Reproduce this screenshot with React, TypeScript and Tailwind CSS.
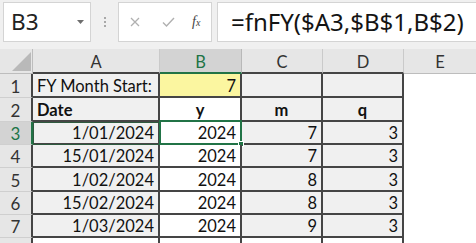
import { ReactNode } from 'react';

type Row = { n: number; a: string; b: string; c: string; d: string; h: string };

const rows: Row[] = [
  { n: 1, a: 'FY Month Start:', b: '7', c: '', d: '', h: 'h-[24px]' },
  { n: 2, a: 'Date', b: 'y', c: 'm', d: 'q', h: 'h-[24px]' },
  { n: 3, a: '1/01/2024', b: '2024', c: '7', d: '3', h: 'h-[23px]' },
  { n: 4, a: '15/01/2024', b: '2024', c: '7', d: '3', h: 'h-[23px]' },
  { n: 5, a: '1/02/2024', b: '2024', c: '8', d: '3', h: 'h-[24px]' },
  { n: 6, a: '15/02/2024', b: '2024', c: '8', d: '3', h: 'h-[23px]' },
  { n: 7, a: '1/03/2024', b: '2024', c: '9', d: '3', h: 'h-[23px]' },
];

const TopBar = () => (
  <div className="flex h-[49px] items-start pl-[3px] pt-[2px] font-['Noto_Sans',sans-serif]">
    <div className="flex h-[40px] w-[88px] items-center justify-between border border-[#d4d4d4] bg-white pl-[7px] pr-[6px]">
      <span className="text-[22.5px] leading-none text-[#222]">B3</span>
      <svg width="7" height="4" viewBox="0 0 7 4">
        <path d="M0 0h7L3.5 4z" fill="#6e6e6e" />
      </svg>
    </div>
    <div className="flex h-[40px] w-[27px] flex-col items-center justify-center gap-[2px]">
      <span className="h-[2px] w-[2px] bg-[#a8a8a8]" />
      <span className="h-[2px] w-[2px] bg-[#a8a8a8]" />
      <span className="h-[2px] w-[2px] bg-[#a8a8a8]" />
    </div>
    <div className="flex h-[40px] w-[94px] items-center border border-[#d4d4d4] bg-white">
      <svg className="ml-[11px]" width="10" height="10" viewBox="0 0 10 10">
        <path d="M1 1l8 8M9 1l-8 8" stroke="#b0b0b0" strokeWidth="1.3" />
      </svg>
      <svg className="ml-[22px]" width="13" height="10" viewBox="0 0 13 10">
        <path d="M1 5.5l3.5 3.5L12 1" stroke="#b0b0b0" strokeWidth="1.4" fill="none" />
      </svg>
      <span className="ml-[17px] font-['Liberation_Serif',serif] text-[14px] italic leading-none text-[#444]">
        f<span className="text-[10px]">x</span>
      </span>
    </div>
    <div className="ml-[5px] flex h-[40px] flex-1 items-center border border-r-0 border-[#d4d4d4] bg-white pl-[13px]">
      <span className="text-[24px] leading-none text-[#141414]">=fnFY($A3,$B$1,B$2)</span>
    </div>
  </div>
);

const Cell = ({ children, className }: { children?: ReactNode; className?: string }) => (
  <div
    className={`flex items-center border-b-2 border-r-2 border-[#454545] px-[4px] pt-[2px] text-[16.5px] text-[#111] ${className ?? ''}`}
  >
    {children}
  </div>
);

const Sheet = () => (
  <div className="grid grid-cols-[33px_127px_82px_81px_81px_1fr] font-['Lato',sans-serif]">
    {/* column headers */}
    <div className="flex h-[25px] items-end justify-end border-b border-r border-[#bdbdbd] bg-[#e6e6e6] pb-[2px] pr-[1px]">
      <svg width="19" height="19" viewBox="0 0 19 19">
        <path d="M19 0V19H0z" fill="#b9b9b9" />
      </svg>
    </div>
    <div className="flex h-[25px] items-center justify-center border-r border-b-2 border-r-[#cacaca] border-b-[#454545] bg-[#e6e6e6] pt-[3px] text-[16.5px] text-[#333]">
      A
    </div>
    <div className="flex h-[25px] items-center justify-center border-r border-b-2 border-r-[#b8b8b8] border-b-[#217346] bg-[#d3d3d3] pt-[3px] text-[16.5px] text-[#217346]">
      B
    </div>
    <div className="flex h-[25px] items-center justify-center border-r border-b-2 border-r-[#cacaca] border-b-[#454545] bg-[#e6e6e6] pt-[3px] text-[16.5px] text-[#333]">
      C
    </div>
    <div className="flex h-[25px] items-center justify-center border-r border-b-2 border-r-[#cacaca] border-b-[#454545] bg-[#e6e6e6] pt-[3px] text-[16.5px] text-[#333]">
      D
    </div>
    <div className="flex h-[25px] items-center justify-center border-b border-[#bdbdbd] bg-[#e6e6e6] pt-[3px] text-[16.5px] text-[#333]">
      E
    </div>

    {rows.map((r) => {
      const sel = r.n === 3;
      const bold = r.n === 2 ? 'font-bold' : '';
      return [
        <div
          key={`h${r.n}`}
          className={`${r.h} flex items-center justify-center border-b border-r-2 border-b-[#cfcfcf] pt-[2px] text-[17px] ${
            sel ? 'border-r-[#217346] bg-[#d3d3d3] text-[#217346]' : 'border-r-[#454545] bg-[#e6e6e6] text-[#333]'
          }`}
        >
          {r.n}
        </div>,
        <Cell
          key={`a${r.n}`}
          className={`${r.h} ${bold} ${r.n <= 2 ? 'justify-start' : 'justify-end'} ${
            sel ? 'border-[#2f5a3f] outline outline-1 -outline-offset-1 outline-[#2f5a3f]' : ''
          }`}
        >
          {r.a}
        </Cell>,
        <Cell
          key={`b${r.n}`}
          className={`${r.h} ${bold} relative ${r.n === 2 ? 'justify-center' : 'justify-end'} ${
            r.n === 1 ? 'bg-[#fbf6a0]' : 'bg-white'
          }`}
        >
          {r.b}
          {sel && (
            <>
              <div className="absolute -left-[1px] -top-[2px] bottom-[-2px] right-[-2px] border-2 border-[#217346]" />
              <div className="absolute -bottom-[4px] -right-[4px] h-[6px] w-[6px] border border-white bg-[#217346]" />
            </>
          )}
        </Cell>,
        <Cell key={`c${r.n}`} className={`${r.h} ${bold} ${r.n === 2 ? 'justify-center' : 'justify-end'}`}>
          {r.c}
        </Cell>,
        <Cell key={`d${r.n}`} className={`${r.h} ${bold} ${r.n === 2 ? 'justify-center' : 'justify-end'}`}>
          {r.d}
        </Cell>,
        <div key={`e${r.n}`} className={`${r.h} bg-white`} />,
      ];
    })}

    {/* row 8, cut off */}
    <div className="h-[5px] border-r-2 border-[#454545] bg-[#e6e6e6]" />
    <div className="h-[5px] border-r-2 border-[#454545] bg-white" />
    <div className="h-[5px] border-r-2 border-[#454545] bg-white" />
    <div className="h-[5px] border-r-2 border-[#454545] bg-white" />
    <div className="h-[5px] border-r-2 border-[#454545] bg-white" />
    <div className="h-[5px] bg-white" />
  </div>
);

export default function App() {
  return (
    <div className="h-[243px] w-[476px] overflow-hidden bg-[#f0f0f0]">
      <TopBar />
      <Sheet />
    </div>
  );
}
